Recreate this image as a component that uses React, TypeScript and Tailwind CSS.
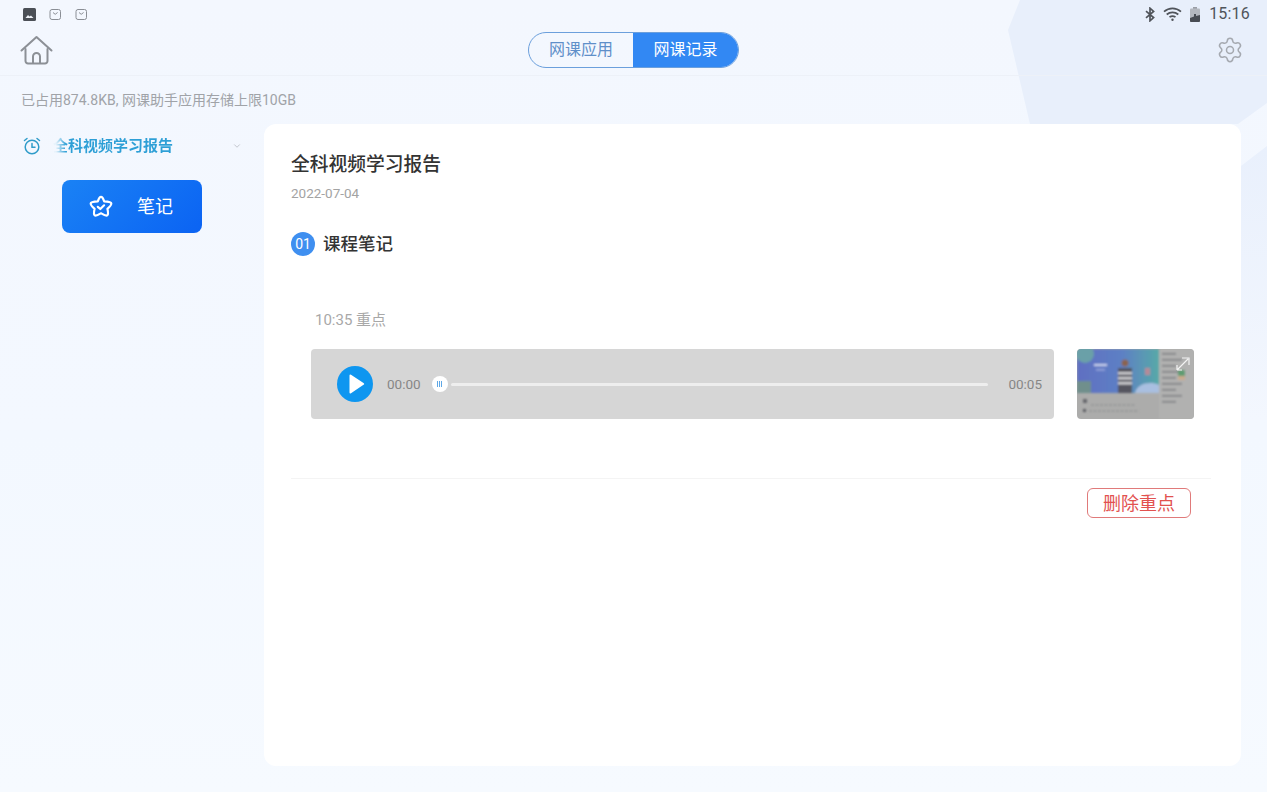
import { ChevronDown, Settings } from "lucide-react";

const FONT = "font-['Roboto','Noto_Sans_CJK_SC',sans-serif]";

function StatusBar() {
  return (
    <div className="flex h-[28px] items-center justify-between pl-[23px] pr-[17px]">
      <div className="flex items-center gap-[13px]">
        <svg width="13" height="13" viewBox="0 0 13 13">
          <rect width="13" height="13" rx="1.5" fill="#4b4f56" />
          <path d="M2.5 10l2.5-3 1.5 1.5 1.5-1 2.5 2.5z" fill="#eef2f8" />
        </svg>
        {[0, 1].map((i) => (
          <svg key={i} width="13" height="13" viewBox="0 0 13 13" fill="none" stroke="#8a8e95" strokeWidth="1">
            <rect x="1" y="1.5" width="10.5" height="10" rx="2" />
            <path d="M4 4.5l2.2 1.8 2.400-1.800" />
          </svg>
        ))}
      </div>
      <div className="flex items-center text-[#50545a]">
        <svg width="10" height="15" viewBox="0 0 10 15" fill="none" stroke="#50545a" strokeWidth="1.700">
          <path d="M1 4.200l7.600 6.400-3.600 3.200V1.200l3.600 3.200L1 10.800" />
        </svg>
        <svg className="ml-[8px]" width="19" height="14" viewBox="0 0 19 14" fill="none" stroke="#50545a" strokeWidth="1.700">
          <path d="M1 4.700c5-4.400 12-4.400 17 0" />
          <path d="M3.700 7.500c3.400-2.900 8.200-2.900 11.600 0" />
          <path d="M6.500 10.200c1.800-1.400 4.200-1.400 6 0" />
          <circle cx="9.500" cy="12.700" r="1.200" fill="#50545a" stroke="none" />
        </svg>
        <svg className="ml-[8px]" width="10" height="15" viewBox="0 0 10 15">
          <rect x="3" y="0" width="4" height="2" fill="#9a9ea6" />
          <rect x="0" y="1.500" width="10" height="13.500" rx="1" fill="#b4b8bf" />
          <path d="M0 11l4-1.500V7l2 0v2l4-1v6a1 1 0 0 1-1 1H1a1 1 0 0 1-1-1z" fill="#484c53" />
        </svg>
        <span className="ml-[9px] text-[16px] leading-none tracking-[0.2px]">15:16</span>
      </div>
    </div>
  );
}

function HomeIcon() {
  return (
    <svg width="33" height="30" viewBox="0 0 33 30" fill="none" stroke="#8c9096" strokeWidth="2" strokeLinecap="round" strokeLinejoin="round">
      <path d="M1.500 15.500L16.500 2l15 13.500" />
      <path d="M5.500 14v12a2.500 2.500 0 0 0 2.500 2.500h17a2.500 2.500 0 0 0 2.500-2.500V14" />
      <path d="M13 28v-6.500a3.500 3.500 0 0 1 7 0V28" />
    </svg>
  );
}

function Header() {
  return (
    <div className="relative flex h-[48px] items-center justify-between border-b border-[#edf1f8] pl-[20px] pr-[23px]">
      <div className="pb-[4px]">
        <HomeIcon />
      </div>
      <div className="absolute left-[528px] top-[4px] flex h-[36px] w-[211px] overflow-hidden rounded-full border-[1.5px] border-[#6b9fdc] text-[16px]">
        <div className="flex w-[104px] items-center justify-center text-[#5f8fc9]">网课应用</div>
        <div className="flex flex-1 items-center justify-center bg-[#3288f3] text-white">网课记录</div>
      </div>
      <div className="pb-[4px]">
        <Settings className="text-[#a5a9b0]" size={28} strokeWidth={1.300} />
      </div>
    </div>
  );
}

function Sidebar() {
  return (
    <div className="w-[264px] shrink-0">
      <div className="flex h-[44px] items-center pl-[23px] pr-[22px]">
        <svg width="18" height="18" viewBox="0 0 18 18" fill="none" stroke="#2f9cc9" strokeWidth="1.500" strokeLinecap="round">
          <circle cx="9" cy="10" r="6.800" />
          <path d="M9 6.500V10.300h3" />
          <path d="M1.500 3.500l2.500-2M16.500 3.500l-2.500-2" />
        </svg>
        <span className="ml-[12px] bg-[linear-gradient(90deg,#e6f2fb_0px,#e6f2fb_3px,#2d9fd6_13px)] bg-clip-text text-[15px] font-bold text-transparent">
          全科视频学习报告
        </span>
        <ChevronDown className="ml-auto text-[#b9bdc4]" size={10} strokeWidth={2} />
      </div>
      <div className="ml-[62px] mt-[12px] flex h-[53px] w-[140px] items-center rounded-[8px] bg-[linear-gradient(135deg,#1a82f5,#0b63f3)] pl-[27px] text-white">
        <svg width="24" height="24" viewBox="0 0 24 24" fill="none" stroke="white" strokeWidth="2.200" strokeLinejoin="round" strokeLinecap="round">
          <path d="M12 1.800c1.300 0 2.500 2.400 3.200 4.600 2.600.1 6.900.5 7.100 2.100.2 1.600-2.300 3.900-3.900 5.300.6 2.500 1.100 5.700-.2 6.600-1.300.9-4.200-.9-6.200-2.100-2 1.200-4.900 3-6.200 2.100-1.300-.9-.8-4.100-.2-6.600-1.600-1.400-4.100-3.700-3.900-5.300.2-1.600 4.500-2 7.100-2.100.7-2.200 1.900-4.600 3.200-4.600z" />
          <path d="M8.800 11.800l2.500 2.200 3.800-3.700" />
        </svg>
        <span className="ml-[24px] text-[18px]">笔记</span>
      </div>
    </div>
  );
}

function Thumbnail() {
  return (
    <svg className="rounded-[4px]" width="117" height="70" viewBox="0 0 117 70">
      <defs>
        <filter id="soft" x="-5%" y="-5%" width="110%" height="110%">
          <feGaussianBlur stdDeviation="0.900" />
        </filter>
        <linearGradient id="wall" x1="0" y1="0" x2="1" y2="0">
          <stop offset="0" stopColor="#5f6fc2" />
          <stop offset="0.550" stopColor="#5d80c4" />
          <stop offset="1" stopColor="#58a9a8" />
        </linearGradient>
      </defs>
      <rect width="117" height="70" fill="#acacab" />
      <g filter="url(#soft)">
        <rect width="82" height="44" fill="url(#wall)" />
        <circle cx="8" cy="5" r="9" fill="#6aa0a8" />
        <rect x="0" y="32" width="14" height="12" fill="#6f8f8c" />
        <path d="M58 44c2-10 16-12 24-8v8z" fill="#a9bfe0" />
        <rect x="68" y="19" width="5" height="7" fill="#b58a98" />
        <rect x="17" y="15" width="13" height="2" fill="#c9d2ee" />
        <rect x="19" y="20" width="9" height="1.500" fill="#9aa8de" />
        <circle cx="48" cy="14" r="3.500" fill="#8a6450" />
        <rect x="41" y="19" width="14" height="25" fill="#55545e" />
        <rect x="41" y="23" width="14" height="2.500" fill="#cfcfd2" />
        <rect x="41" y="28" width="14" height="2.500" fill="#cfcfd2" />
        <rect x="41" y="33" width="14" height="2.500" fill="#cfcfd2" />
        <rect x="82" width="35" height="70" fill="#b1b1b0" />
        {[4, 10, 16, 22, 28, 34, 40, 46, 52].map((y) => (
          <rect key={y} x="85" y={y} width={y % 4 === 0 ? 14 : 20} height="1.500" fill="#77787c" />
        ))}
        <rect x="101" y="21" width="7" height="6" fill="#5f9c72" />
        <rect x="101" y="27" width="7" height="4" fill="#c9ab8e" />
        <rect x="6" y="50" width="4" height="4" fill="#66686c" />
        <rect x="6" y="60" width="3" height="3" fill="#5a5c60" />
        <path d="M14 56h44M12 62h50" stroke="#88898b" strokeWidth="1.200" strokeDasharray="3 1.500" />
      </g>
      <path d="M100 21l11-11M105 9h7v7M100 21v-5M100 21h5" stroke="#f3f3f3" strokeWidth="1.200" fill="none" />
    </svg>
  );
}

function NoteItem() {
  return (
    <div className="flex items-stretch pl-[47px] pr-[47px]">
      <div className="flex h-[70px] flex-1 items-center rounded-[4px] bg-[#d6d6d6] pl-[26px] pr-[12px]">
        <div className="flex h-[36px] w-[36px] items-center justify-center rounded-full bg-[#0e96f0]">
          <svg className="ml-[3px]" width="17" height="20" viewBox="0 0 17 20">
            <path d="M1.500 1.500a1 1 0 0 1 1.500-.8l12.500 8.400a1 1 0 0 1 0 1.700L3 19.200a1 1 0 0 1-1.500-.8z" fill="white" />
          </svg>
        </div>
        <span className="ml-[14px] text-[13.5px] text-[#868686]">00:00</span>
        <div className="ml-[11px] flex h-[16px] w-[16px] items-center justify-center gap-[1px] rounded-full bg-white">
          <i className="h-[6px] w-[1px] bg-[#5fa8e6]" />
          <i className="h-[6px] w-[1px] bg-[#5fa8e6]" />
          <i className="h-[6px] w-[1px] bg-[#5fa8e6]" />
        </div>
        <div className="ml-[3px] h-[3px] flex-1 rounded-full bg-[#eeeeee]" />
        <span className="ml-[20px] text-[13.5px] text-[#868686]">00:05</span>
      </div>
      <div className="ml-[23px]">
        <Thumbnail />
      </div>
    </div>
  );
}

function ReportCard() {
  return (
    <div className="h-[642px] w-[977px] rounded-[12px] bg-white pt-[27px]">
      <div className="pl-[27px]">
        <div className="text-[18.75px] font-medium leading-[28px] text-[#333333]">全科视频学习报告</div>
        <div className="mt-[4px] text-[13.5px] leading-[20px] text-[#a3a3a3]">2022-07-04</div>
        <div className="mt-[29px] flex h-[24px] items-center">
          <div className="flex h-[24px] w-[24px] items-center justify-center rounded-full bg-[#3f8ff0] text-[14px] text-white">01</div>
          <span className="ml-[8px] text-[17.5px] font-medium text-[#333333]">课程笔记</span>
        </div>
      </div>
      <div className="ml-[51px] mt-[53px] text-[15px] leading-[22px] text-[#a8a8a8]">10:35 重点</div>
      <div className="mt-[18px]">
        <NoteItem />
      </div>
      <div className="ml-[27px] mr-[30px] mt-[59px] border-t border-[#f4f4f4]" />
      <div className="mr-[50px] mt-[9px] flex justify-end">
        <div className="flex h-[30px] w-[104px] items-center justify-center rounded-[6px] border-[1.5px] border-[#e07a7a] text-[18px] text-[#e2514f]">
          删除重点
        </div>
      </div>
    </div>
  );
}

export default function App() {
  return (
    <div className={`${FONT} relative h-[792px] w-[1267px] overflow-hidden bg-[linear-gradient(180deg,#f3f7fe_0%,#f3f8ff_55%,#f6faff_100%)]`}>
      <svg className="absolute right-0 top-0" width="267" height="420" viewBox="0 0 267 420">
        <defs>
          <linearGradient id="fade" x1="0" y1="0" x2="0" y2="1">
            <stop offset="0" stopColor="#e9f0fc" />
            <stop offset="1" stopColor="#f3f7fe" />
          </linearGradient>
        </defs>
        <path d="M20 0L8 30l22 94h208l29-21V0z" fill="#e8effb" />
        <path d="M241 166l26-20v274h-26z" fill="url(#fade)" />
      </svg>
      <div className="relative">
        <StatusBar />
        <Header />
        <div className="flex h-[48px] items-center pl-[21px] text-[14px] text-[#a0a3a8]">
          已占用874.8KB, 网课助手应用存储上限10GB
        </div>
        <div className="flex">
          <Sidebar />
          <ReportCard />
        </div>
      </div>
    </div>
  );
}
